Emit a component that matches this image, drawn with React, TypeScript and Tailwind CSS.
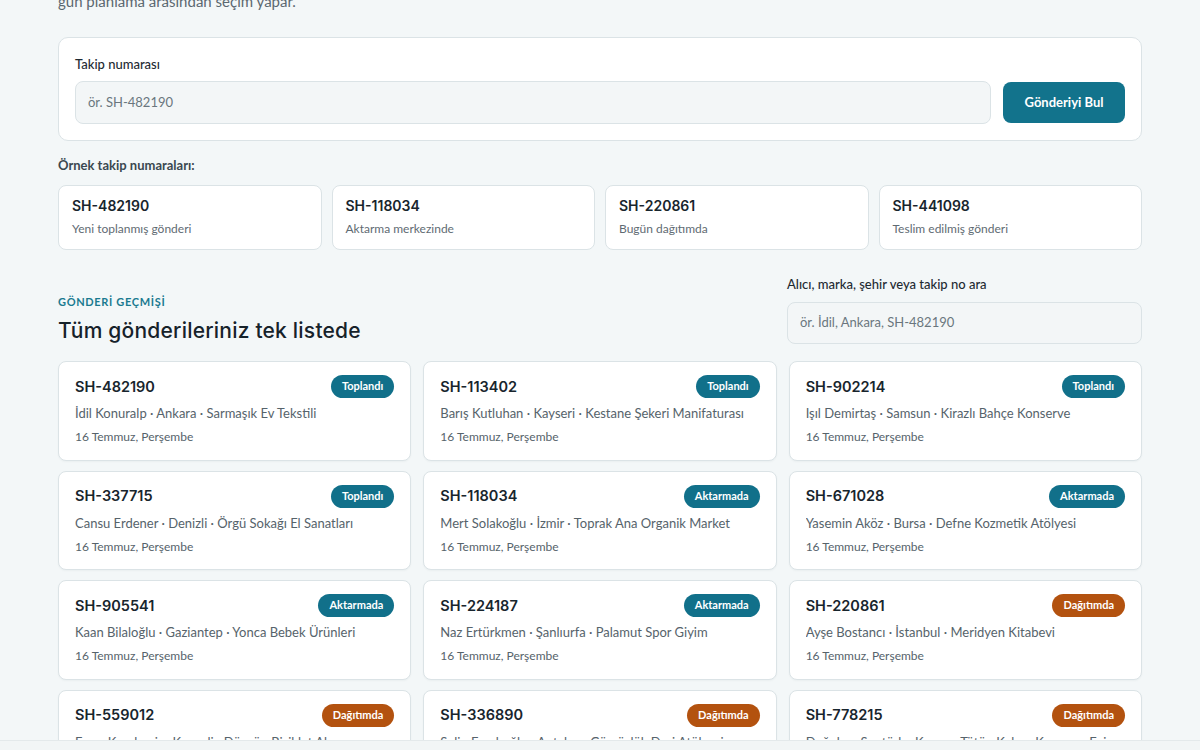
import React from 'react';

type Status = 'Toplandı' | 'Aktarmada' | 'Dağıtımda';

const samples = [
  { code: 'SH-482190', note: 'Yeni toplanmış gönderi' },
  { code: 'SH-118034', note: 'Aktarma merkezinde' },
  { code: 'SH-220861', note: 'Bugün dağıtımda' },
  { code: 'SH-441098', note: 'Teslim edilmiş gönderi' },
];

const shipments: { code: string; line: string; status: Status }[] = [
  { code: 'SH-482190', line: 'İdil Konuralp · Ankara · Sarmaşık Ev Tekstili', status: 'Toplandı' },
  { code: 'SH-113402', line: 'Barış Kutluhan · Kayseri · Kestane Şekeri Manifaturası', status: 'Toplandı' },
  { code: 'SH-902214', line: 'Işıl Demirtaş · Samsun · Kirazlı Bahçe Konserve', status: 'Toplandı' },
  { code: 'SH-337715', line: 'Cansu Erdener · Denizli · Örgü Sokağı El Sanatları', status: 'Toplandı' },
  { code: 'SH-118034', line: 'Mert Solakoğlu · İzmir · Toprak Ana Organik Market', status: 'Aktarmada' },
  { code: 'SH-671028', line: 'Yasemin Aköz · Bursa · Defne Kozmetik Atölyesi', status: 'Aktarmada' },
  { code: 'SH-905541', line: 'Kaan Bilaloğlu · Gaziantep · Yonca Bebek Ürünleri', status: 'Aktarmada' },
  { code: 'SH-224187', line: 'Naz Ertürkmen · Şanlıurfa · Palamut Spor Giyim', status: 'Aktarmada' },
  { code: 'SH-220861', line: 'Ayşe Bostancı · İstanbul · Meridyen Kitabevi', status: 'Dağıtımda' },
  { code: 'SH-559012', line: 'Emre Kandemir · Kocaeli · Düzgün Bisiklet Aksesuar', status: 'Dağıtımda' },
  { code: 'SH-336890', line: 'Selin Ferahoğlu · Antalya · Gümüşlük Deri Atölyesi', status: 'Dağıtımda' },
  { code: 'SH-778215', line: 'Doğukan Sarıtürk · Konya · Tütün Kahve Kavurma Evi', status: 'Dağıtımda' },
];

const body = { fontFamily: 'Lato, "Noto Sans", sans-serif' };
const head = { fontFamily: 'Inter, "Noto Sans", sans-serif' };

const Badge: React.FC<{ status: Status }> = ({ status }) => {
  const color = status === 'Dağıtımda' ? 'bg-[#b3520f]' : 'bg-[#11708a]';
  return (
    <span className={`${color} h-[23px] px-[11px] rounded-full text-white text-[11px] font-bold flex items-center`}>
      {status}
    </span>
  );
};

const App: React.FC = () => {
  return (
    <div className="min-h-screen w-full bg-[#f3f7f8] text-[#1b2830] pb-16" style={body}>
      <div className="max-w-[1084px] mx-auto">
        <p className="text-[15px] leading-[22px] text-[#5b6870] -mt-[10px]">gün planlama arasından seçim yapar.</p>

        {/* Tracking form */}
        <div className="mt-[25px] bg-white border border-[#dbe3e6] rounded-[10px] px-4 pt-[17px] pb-4">
          <label className="block text-[13px] leading-[18px] font-medium text-[#1e2a32]">Takip numarası</label>
          <div className="mt-[8px] flex items-center gap-3">
            <div className="flex-1 h-[43px] bg-[#f3f6f7] border border-[#dbe3e6] rounded-[8px] px-3 flex items-center text-[13px] text-[#6a767e]">
              ör. SH-482190
            </div>
            <button className="h-[41px] w-[122px] bg-[#12738c] text-white text-[13px] font-bold rounded-[8px]">
              Gönderiyi Bul
            </button>
          </div>
        </div>

        <div className="mt-[15px] text-[13px] leading-[18px] font-bold text-[#3a4850]">Örnek takip numaraları:</div>
        <div className="mt-[11px] grid grid-cols-4 gap-[10px]">
          {samples.map((s) => (
            <div key={s.code} className="bg-white border border-[#dbe3e6] rounded-[8px] px-[13px] pt-[10px] pb-[12px]">
              <div className="text-[14px] leading-[20px] font-semibold text-[#18252d]" style={head}>{s.code}</div>
              <div className="mt-[5px] text-[12px] leading-[16px] text-[#5f6b73]">{s.note}</div>
            </div>
          ))}
        </div>

        {/* History header */}
        <div className="mt-[25px] flex items-end justify-between">
          <div>
            <div className="text-[11px] leading-[16px] font-bold tracking-[0.06em] text-[#1a7a90]">GÖNDERİ GEÇMİŞİ</div>
            <h2 className="mt-[8px] text-[21px] leading-[26px] font-medium text-[#16222a] tracking-[0.01em]" style={head}>
              Tüm gönderileriniz tek listede
            </h2>
          </div>
          <div className="w-[355px]">
            <div className="text-[13px] leading-[18px] font-medium text-[#1e2a32]">Alıcı, marka, şehir veya takip no ara</div>
            <div className="mt-[9px] h-[42px] bg-[#f3f6f7] border border-[#dbe3e6] rounded-[8px] px-3 flex items-center text-[13px] text-[#6a767e]">
              ör. İdil, Ankara, SH-482190
            </div>
          </div>
        </div>

        <div className="mt-[17px] grid grid-cols-3 gap-x-3 gap-y-[10px]">
          {shipments.map((s) => (
            <div key={s.code} className="bg-white border border-[#dbe3e6] rounded-[8px] px-4 pt-[13px] pb-[14.5px] shadow-[0_1px_2px_rgba(16,40,50,0.04)]">
              <div className="flex items-center justify-between h-[23px]">
                <span className="text-[14.5px] font-semibold text-[#18252d]" style={head}>{s.code}</span>
                <Badge status={s.status} />
              </div>
              <div className="mt-[6px] text-[13px] leading-[18px] text-[#56636b] whitespace-nowrap overflow-hidden">{s.line}</div>
              <div className="mt-[7px] text-[12px] leading-[16px] text-[#56636b]">16 Temmuz, Perşembe</div>
            </div>
          ))}
        </div>
      </div>

      <div className="fixed bottom-0 left-0 right-0 h-[10px] bg-[#f2f5f6] border-t border-[#e4e9eb]" />
    </div>
  );
};

export default App;
